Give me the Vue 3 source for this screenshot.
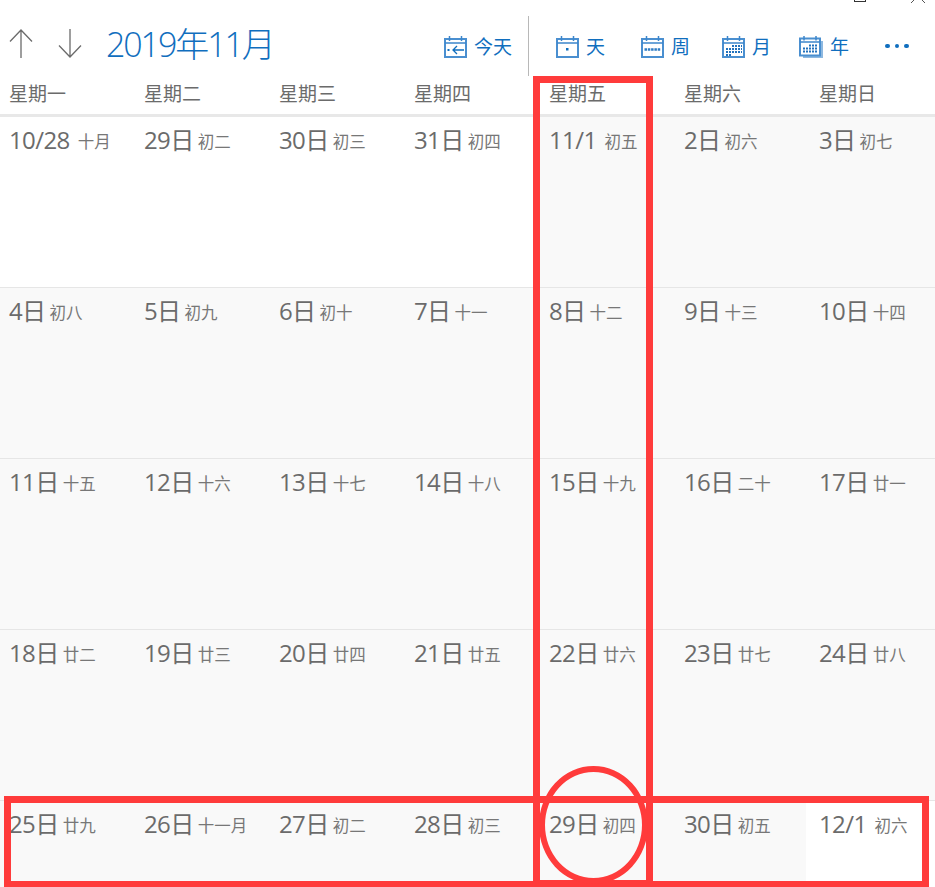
<script setup>
const rows = [
  [['10/28','十月',1],['29日','初二',1],['30日','初三',1],['31日','初四',1],['11/1','初五'],['2日','初六'],['3日','初七']],
  [['4日','初八'],['5日','初九'],['6日','初十'],['7日','十一'],['8日','十二'],['9日','十三'],['10日','十四']],
  [['11日','十五'],['12日','十六'],['13日','十七'],['14日','十八'],['15日','十九'],['16日','二十'],['17日','廿一']],
  [['18日','廿二'],['19日','廿三'],['20日','廿四'],['21日','廿五'],['22日','廿六'],['23日','廿七'],['24日','廿八']],
  [['25日','廿九'],['26日','十一月'],['27日','初二'],['28日','初三'],['29日','初四'],['30日','初五'],['12/1','初六',1]],
]
const weekdays = ['星期一','星期二','星期三','星期四','星期五','星期六','星期日']
</script>

<template>
  <div class="app">
    <header class="toolbar">
      <svg class="arrow" viewBox="0 0 24 29" width="24" height="29"><path d="M12 1v28M1 12.5 12 1l11 11.5" /></svg>
      <svg class="arrow down" viewBox="0 0 24 29" width="24" height="29"><path d="M12 0v28M1 16.5 12 28l11-11.5" /></svg>
      <h1 class="title">2019年11月</h1>

      <div class="tools">
        <div class="tool today">
          <svg class="icon" viewBox="0 0 23 23" width="23" height="23">
            <path class="frame" d="M1 4h21v18H1z" /><path class="head" d="M1 8h21M5.500 1v5M17.500 1v5" />
            <path class="thin" d="M20 15H9M13 11l-4 4 4 4" /><rect class="fill" x="3.500" y="14" width="2" height="2" />
          </svg>
          <span>今天</span>
        </div>
        <div class="divider"></div>
        <div class="tool day">
          <svg class="icon" viewBox="0 0 23 23" width="23" height="23">
            <path class="frame" d="M1 4h21v18H1z" /><path class="head" d="M1 8h21M5.500 1v5M17.500 1v5" />
            <rect class="fill" x="10" y="13" width="2.500" height="2.500" />
          </svg>
          <span>天</span>
        </div>
        <div class="tool week">
          <svg class="icon" viewBox="0 0 23 23" width="23" height="23">
            <path class="frame" d="M1 4h21v18H1z" /><path class="head" d="M1 8h21M5.500 1v5M17.500 1v5" />
            <path class="dash" d="M3.500 14.500h16" />
          </svg>
          <span>周</span>
        </div>
        <div class="tool month">
          <svg class="icon" viewBox="0 0 23 23" width="23" height="23">
            <path class="frame" d="M1 4h21v18H1z" /><path class="head" d="M1 8h21M5.500 1v5M17.500 1v5" />
            <path class="grid" d="M10 11h10M4 14h16M4 17h16M4 20h6" />
          </svg>
          <span>月</span>
        </div>
        <div class="tool year">
          <svg class="icon wide" viewBox="0 0 24 23" width="24" height="23">
            <path class="shadow" d="M23 6v16H4" /><path class="frame" d="M1 3.500h20v17H1z" /><path class="head" d="M1 7h20M5 1v4.500M17 1v4.500" />
            <path class="grid" d="M10 10.500h8M4 13.500h14M4 16.500h14" />
          </svg>
          <span>年</span>
        </div>
        <div class="more"><i></i><i></i><i></i></div>
      </div>
    </header>

    <div class="weekdays">
      <div v-for="d in weekdays" :key="d" class="weekday">{{ d }}</div>
    </div>

    <div class="weeks">
      <div v-for="(row, r) in rows" :key="r" class="week-row">
        <div v-for="(c, i) in row" :key="i" class="cell" :class="{ plain: c[2] }">
          <span class="date">{{ c[0] }}</span><span class="lunar" :class="{ wide: c[0].includes('/') }">{{ c[1] }}</span>
        </div>
      </div>
    </div>

    <div class="win-box"></div>
    <svg class="win-close" viewBox="0 0 14 3" width="14" height="3"><path d="M0 3 3 0M11 0l3 3" /></svg>

    <div class="mark mark-col"></div>
    <div class="mark mark-row"></div>
    <div class="mark mark-ring"></div>
  </div>
</template>

<style scoped>
.app {
  position: relative;
  width: 935px;
  height: 887px;
  overflow: hidden;
  background: #fff;
  font-family: "Open Sans", "Noto Sans CJK SC", sans-serif;
}
.toolbar {
  display: flex;
  align-items: center;
  height: 76px;
  padding: 16px 0 0 9px;
  box-sizing: border-box;
}
.arrow { fill: none; stroke: #6b6b6b; stroke-width: 1.300; margin-bottom: 6px; }
.arrow.down { margin-left: 25px; }
.title {
  margin: 0 0 4px 24px;
  font-size: 34px;
  font-weight: 300;
  line-height: 44px;
  letter-spacing: -2.100px;
  color: #106ebe;
  font-family: "Open Sans", "Noto Sans CJK SC", sans-serif;
}
.tools { display: flex; align-items: center; margin-left: auto; height: 60px; }
.tool {
  display: flex;
  align-items: center;
  gap: 7px;
  font-size: 19px;
  color: #106ebe;
  font-family: "Noto Sans CJK SC", sans-serif;
}
.tool span { line-height: 24px; }
.today { width: 84px; }
.day { width: 85px; margin-left: 27px; }
.week { width: 81px; }
.month { width: 77px; }
.year { width: 86px; }
.divider { width: 1px; height: 60px; background: #b8b8b8; }
.icon { flex: none; fill: none; }
.frame { fill: none; stroke: #4a8fd0; stroke-width: 2; }
.head { fill: none; stroke: #3c86cc; stroke-width: 1.500; }
.thin { fill: none; stroke: #106ebe; stroke-width: 1.300; }
.fill { fill: #106ebe; }
.dash { fill: none; stroke: #2f7cc4; stroke-width: 2.500; stroke-dasharray: 2.500 .8; }
.grid { fill: none; stroke: #2272bd; stroke-width: 2; stroke-dasharray: 2 1; }
.shadow { fill: none; stroke: #8db8e0; stroke-width: 2; }
.more { display: flex; gap: 5px; width: 50px; }
.more i { width: 4.500px; height: 4.500px; border-radius: 50%; background: #106ebe; }

.weekdays {
  display: grid;
  grid-template-columns: repeat(7, 135px);
  height: 38px;
  border-bottom: 3px solid #e8e8e8;
  margin-left: -4px;
  margin-right: -6px;
}
.weekday {
  padding: 4px 0 0 13px;
  font-size: 19px;
  line-height: 26px;
  color: #6b6b6b;
  font-family: "Noto Sans CJK SC", sans-serif;
}
.weeks { margin: 0 -6px 0 -4px; }
.week-row {
  display: grid;
  grid-template-columns: repeat(7, 135px);
  height: 171px;
  box-sizing: border-box;
  border-bottom: 1px solid #e6e6e6;
}
.cell {
  background: #f9f9f9;
  padding: 6px 0 0 13px;
  white-space: nowrap;
  color: #6b6b6b;
}
.cell.plain { background: #fff; }
.date { font-size: 24px; line-height: 34px; letter-spacing: -.6px; }
.lunar {
  margin-left: 4px;
  font-size: 16.500px;
  line-height: 34px;
  vertical-align: 1px;
  color: #777;
  font-family: "Noto Sans CJK SC", sans-serif;
}
.lunar.wide { margin-left: 8px; }

.win-box { position: absolute; left: 854px; top: -10px; width: 10px; height: 10px; border: 1px solid #333; }
.win-close { position: absolute; left: 911px; top: 0; fill: none; stroke: #555; stroke-width: 1; }

.mark { position: absolute; box-sizing: border-box; pointer-events: none; }
.mark-col { left: 533px; top: 76px; width: 120px; height: 811px; border: 7px solid #ff3b3b; }
.mark-row { left: 4px; top: 796px; width: 925px; height: 91px; border: 7px solid #ff3b3b; border-bottom-width: 6px; }
.mark-ring { left: 539px; top: 766px; width: 109px; height: 118px; border: 6px solid #ff3b3b; border-radius: 50%; }
</style>
